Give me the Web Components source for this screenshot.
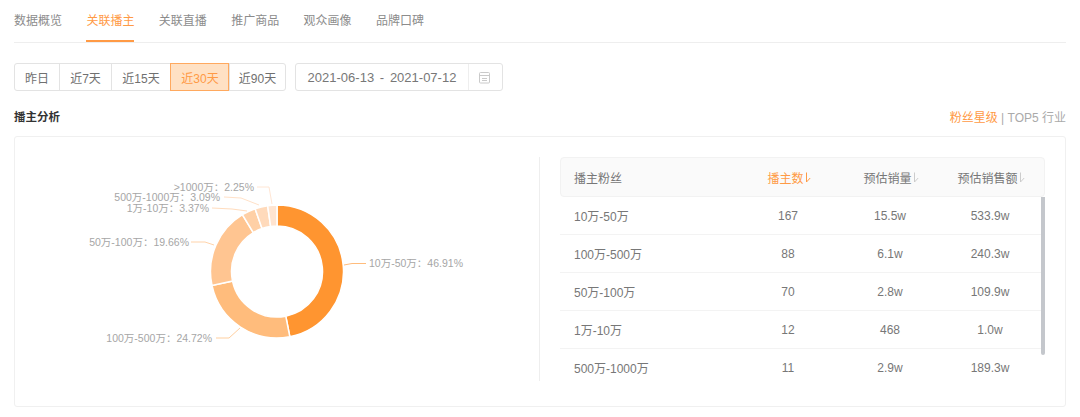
<!DOCTYPE html>
<html>
<head>
<meta charset="utf-8">
<style>
    html, body { margin: 0; background: #fff; }
    body { font-family: "Liberation Sans", "Noto Sans CJK SC", sans-serif; color: #666; }
</style>
</head>
<body>
<anchor-page></anchor-page>
<script>
(() => {
    const FONT = `"Liberation Sans", "Noto Sans CJK SC", sans-serif`

    // tab strip on top
    class TabBar extends HTMLElement {
        constructor () {
            super()
            this.attachShadow({ mode: 'open' })
            const tabs = ['数据概览', '关联播主', '关联直播', '推广商品', '观众画像', '品牌口碑']
            this.shadowRoot.innerHTML = `
                <style>
                    :host { display: flex; gap: 24.4px; height: 42px; border-bottom: 1px solid #eee; font-size: 12px; }
                    div { height: 42px; line-height: 43px; width: 48px; white-space: nowrap; color: #8c8c8c; box-sizing: border-box; }
                    .on { color: #ff9a45; border-bottom: 2px solid #ff9a45; }
                </style>
                ${tabs.map((t, i) => `<div class="${i === 1 ? 'on' : ''}">${t}</div>`).join('')}
            `
        }
    }

    // quick ranges + date input
    class RangePicker extends HTMLElement {
        constructor () {
            super()
            this.attachShadow({ mode: 'open' })
            const items = [['昨日', 44], ['近7天', 52], ['近15天', 59], ['近30天', 59], ['近90天', 56]]
            this.shadowRoot.innerHTML = `
                <style>
                    :host { display: flex; gap: 9px; height: 28px; font-size: 12px; }
                    .group { display: flex; border: 1px solid #e3e3e3; border-radius: 3px; box-sizing: border-box; }
                    .group div { display: flex; align-items: center; justify-content: center; border-left: 1px solid #e3e3e3; box-sizing: border-box; color: #707070; }
                    .group div:first-child { border-left: 0; }
                    .group .on { background: #ffe1c4; color: #ff9a45; outline: 1px solid #ffa95f; outline-offset: -1px; height: 28px; margin-top: -1px; }
                    .date { display: flex; width: 208px; border: 1px solid #e3e3e3; border-radius: 3px; box-sizing: border-box; }
                    .val { width: 172px; display: flex; align-items: center; justify-content: center; border-right: 1px solid #eee; font-size: 13px; color: #777; white-space: pre; word-spacing: -0.75px; }
                    .ico { flex: 1; display: flex; align-items: center; justify-content: center; padding-right: 3px; }
                </style>
                <div class="group">
                    ${items.map(([t, w], i) => `<div class="${i === 3 ? 'on' : ''}" style="width:${w}px">${t}</div>`).join('')}
                </div>
                <div class="date">
                    <div class="val">2021-06-13  -  2021-07-12</div>
                    <div class="ico">
                        <svg width="13" height="13" viewBox="0 0 13 13" fill="none" stroke="#cacaca" stroke-width="1">
                            <rect x="1.5" y="1.5" width="10" height="10.5" rx="1"/>
                            <path d="M1.5 4.5h10M4 7.5h5M4 9.5h5"/>
                        </svg>
                    </div>
                </div>
            `
        }
    }

    class SectionHead extends HTMLElement {
        constructor () {
            super()
            this.attachShadow({ mode: 'open' })
            this.shadowRoot.innerHTML = `
                <style>
                    :host { display: flex; justify-content: space-between; align-items: center; height: 18px; font-size: 12px; }
                    b { color: #333; font-weight: 700; font-size: 11.5px; }
                    span { color: #aaa; }
                    em { font-style: normal; color: #ff9a45; }
                </style>
                <b>播主分析</b>
                <span><em>粉丝星级</em> | TOP5 行业</span>
            `
        }
    }

    // svg donut, positions are in page pixels minus the chart origin
    class DonutChart extends HTMLElement {
        constructor () {
            super()
            this.attachShadow({ mode: 'open' })
            const cx = 262, cy = 134.5, R = 66.5, r = 45.5
            const slices = [
                [46.91, '#ff9530'], [24.72, '#ffbc7c'], [19.66, '#ffc591'],
                [3.37, '#ffd0a6'], [3.09, '#ffdabb'], [2.25, '#ffe4d0']
            ]
            const pt = (rad, a) => (cx + rad * Math.sin(a)).toFixed(2) + ' ' + (cy - rad * Math.cos(a)).toFixed(2)
            let from = 0
            const arcs = slices.map(([p, c]) => {
                const to = from + p / 100 * Math.PI * 2
                const big = to - from > Math.PI ? 1 : 0
                const d = `M${pt(R, from)}A${R} ${R} 0 ${big} 1 ${pt(R, to)}L${pt(r, to)}A${r} ${r} 0 ${big} 0 ${pt(r, from)}Z`
                from = to
                return `<path d="${d}" fill="${c}" stroke="#fff" stroke-width="1.5"/>`
            }).join('')
            // [text, anchor, x, y, line, colour] in chart coordinates
            const labels = [
                ['10万-50万：46.91%', 'start', 354, 125.5, 'M329 128L337 126.5H351', '#ffbc7c'],
                ['100万-500万：24.72%', 'end', 197, 201, 'M201 201H214L225 191', '#ffcf9f'],
                ['50万-100万：19.66%', 'end', 174, 105, 'M176 105H190L199 108', '#ffd3aa'],
                ['1万-10万：3.37%', 'end', 194, 71, 'M197 71L217 72L232 74', '#ffdcbd'],
                ['500万-1000万：3.09%', 'end', 205, 60, 'M209 60L226 61L244 68', '#ffe1c8'],
                ['>1000万：2.25%', 'end', 239, 50, 'M242 50H254L257 67', '#ffe6d4']
            ]
            const texts = labels.map(([t, a, x, y, l, c]) => `
                <path d="${l}" fill="none" stroke="${c}" stroke-width="1"/>
                <text x="${x}" y="${y}" text-anchor="${a}" dy="4">${t}</text>`).join('')
            this.shadowRoot.innerHTML = `
                <style>
                    :host { display: block; width: 524px; height: 269px; }
                    svg { display: block; }
                    text { font: 10.5px ${FONT}; fill: #a6a6a6; }
                </style>
                <svg width="524" height="269" viewBox="0 0 524 269">${arcs}${texts}</svg>
            `
        }
    }

    class FanTable extends HTMLElement {
        constructor () {
            super()
            this.attachShadow({ mode: 'open' })
            const rows = [
                ['10万-50万', '167', '15.5w', '533.9w'],
                ['100万-500万', '88', '6.1w', '240.3w'],
                ['50万-100万', '70', '2.8w', '109.9w'],
                ['1万-10万', '12', '468', '1.0w'],
                ['500万-1000万', '11', '2.9w', '189.3w']
            ]
            const arrow = c => `<svg width="6" height="11" viewBox="0 0 6 11" fill="none" stroke="${c}" stroke-width="1"><path d="M1.5 0.5V10L5.2 6"/></svg>`
            const heads = [['播主数', '#ff9a45', '#ff9a45'], ['预估销量', '#777', '#ccc'], ['预估销售额', '#777', '#ccc']]
            this.shadowRoot.innerHTML = `
                <style>
                    :host { display: block; width: 485px; font-size: 12px; color: #777; }
                    .row { display: grid; grid-template-columns: 175px 106px 98px 102px; align-items: center; }
                    .head { height: 40px; box-sizing: border-box; background: #fafafa; border: 1px solid #f2f2f2; border-radius: 4px; }
                    .head > div:first-child { padding-left: 13px; }
                    .head .c { display: flex; justify-content: center; align-items: center; gap: 1px; }
                    .body { position: relative; height: 184px; overflow: hidden; }
                    .thumb { position: absolute; top: 0; right: 0; width: 4px; height: 158px; background: #c4c7cc; border-radius: 0 0 2px 2px; }
                    .list .row { height: 38px; box-sizing: border-box; border-bottom: 1px solid #f3f3f3; }
                    .list .row > div:first-child { padding-left: 14px; }
                    .list .row > div:not(:first-child) { text-align: center; }
                </style>
                <div class="row head">
                    <div>播主粉丝</div>
                    ${heads.map(([t, c, a]) => `<div class="c" style="color:${c}">${t}${arrow(a)}</div>`).join('')}
                </div>
                <div class="body">
                    <div class="list">
                        ${rows.map(r => `<div class="row">${r.map(v => `<div>${v}</div>`).join('')}</div>`).join('')}
                    </div>
                    <div class="thumb"></div>
                </div>
            `
        }
    }

    class AnalysisCard extends HTMLElement {
        constructor () {
            super()
            this.attachShadow({ mode: 'open' })
            this.shadowRoot.innerHTML = `
                <style>
                    :host { display: flex; height: 271px; box-sizing: border-box; border: 1px solid #f0f0f0; border-radius: 3px; }
                    .right { margin-top: 20px; height: 224px; padding-left: 20px; border-left: 1px solid #eee; }
                </style>
                <slot name="chart"></slot>
                <div class="right"><slot name="table"></slot></div>
            `
        }
    }

    class AnchorPage extends HTMLElement {
        constructor () {
            super()
            this.attachShadow({ mode: 'open' })
            this.shadowRoot.innerHTML = `
                <style>
                    :host { display: block; padding: 0 14px; width: 1080px; height: 417px; box-sizing: border-box; overflow: hidden; }
                    tab-bar { margin-bottom: 20px; }
                    section-head { margin: 16px 0 11px; }
                </style>
                <tab-bar></tab-bar>
                <range-picker></range-picker>
                <section-head></section-head>
                <analysis-card>
                    <donut-chart slot="chart"></donut-chart>
                    <fan-table slot="table"></fan-table>
                </analysis-card>
            `
        }
    }

    window.customElements.define('tab-bar', TabBar)
    window.customElements.define('range-picker', RangePicker)
    window.customElements.define('section-head', SectionHead)
    window.customElements.define('donut-chart', DonutChart)
    window.customElements.define('fan-table', FanTable)
    window.customElements.define('analysis-card', AnalysisCard)
    window.customElements.define('anchor-page', AnchorPage)
})()
</script>
</body>
</html>
